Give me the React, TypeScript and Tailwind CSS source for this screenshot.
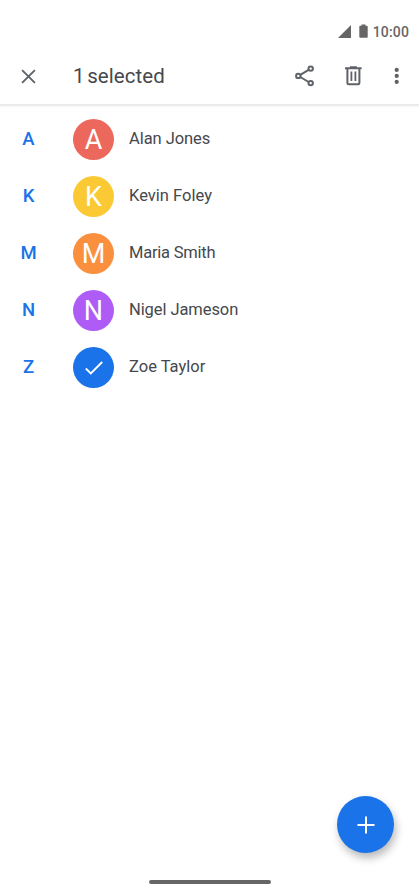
import React from "react";

type Contact = {
  name: string;
  color: string;
  tracking: string;
  selected?: boolean;
};

const contacts: Contact[] = [
  { name: "Alan Jones", color: "bg-[#ec675c]", tracking: "tracking-[-0.06px]" },
  { name: "Kevin Foley", color: "bg-[#fbc934]", tracking: "tracking-[0.02px]" },
  { name: "Maria Smith", color: "bg-[#fa903e]", tracking: "tracking-[-0.22px]" },
  { name: "Nigel Jameson", color: "bg-[#af5cf7]", tracking: "tracking-[-0.08px]" },
  {
    name: "Zoe Taylor",
    color: "bg-[#1a73e8]",
    tracking: "tracking-[0px]",
    selected: true,
  },
];

function StatusBar() {
  return (
    <div className="flex h-[46px] items-start justify-end pr-[10px] pt-[22px] text-[#666]">
      <svg width="13" height="13" viewBox="0 0 13 13" className="mt-[3px]">
        <path d="M13 0v13H0z" fill="currentColor" />
      </svg>
      <svg width="9" height="14" viewBox="0 0 9 14" className="ml-[8px] mt-[2px]">
        <path
          d="M2.5 0.5h4v1.2h1.3q.9 0 .9.9v10.2q0 .9-.9.9H1.2q-.9 0-.9-.9V2.6q0-.9.9-.9h1.3z"
          fill="currentColor"
        />
      </svg>
      <span className="ml-[5px] text-[14px] font-medium leading-[20px] tracking-[0.15px]">
        10:00
      </span>
    </div>
  );
}

function Toolbar() {
  return (
    <header className="flex h-[60px] items-center border-b-2 border-[#ebebeb] text-[#5f6368] shadow-[0_1px_2px_rgba(0,0,0,0.04)]">
      <svg
        width="15"
        height="15"
        viewBox="0 0 15 15"
        className="ml-[21px] mt-[2px]"
        stroke="currentColor"
        strokeWidth="1.9"
      >
        <path d="M1.1 1.1l12.8 12.8M13.9 1.1L1.1 13.9" />
      </svg>
      <h1 className="ml-[37px] flex-1 whitespace-nowrap pt-[2px] text-[20.5px] leading-[24px] tracking-[0.05px] [word-spacing:-2.5px] text-[#45484c]">
        1 selected
      </h1>
      <svg
        width="20"
        height="22"
        viewBox="0 0 20 22"
        className="mr-[29px] mt-[1px]"
        fill="none"
        stroke="currentColor"
        strokeWidth="2"
      >
        <path d="M5.3 9.8l8.3-4.9M5.3 12l8.3 5" />
        <circle cx="3.3" cy="10.9" r="2.2" />
        <circle cx="15.7" cy="3.6" r="2.2" />
        <circle cx="15.7" cy="18.1" r="2.2" />
      </svg>
      <svg
        width="18"
        height="20"
        viewBox="0 0 18 20"
        className="mr-[32px] mt-[2px]"
        fill="none"
        stroke="currentColor"
        strokeWidth="2"
      >
        <path d="M1 2.2h16.6M5.9 1.2h7M3.4 2.2v14.8q0 1.3 1.3 1.3h9.4q1.3 0 1.3-1.3V2.2" />
        <path d="M7.4 5.5v9.5M11.4 5.5v9.5" strokeWidth="1.8" />
      </svg>
      <svg
        width="6"
        height="18"
        viewBox="0 0 6 18"
        className="mr-[19px] mt-[2px]"
        fill="currentColor"
      >
        <circle cx="2.7" cy="2.9" r="2.1" />
        <circle cx="2.7" cy="8.9" r="2.1" />
        <circle cx="2.7" cy="14.9" r="2.1" />
      </svg>
    </header>
  );
}

function ContactRow({ contact }: { contact: Contact }) {
  const initial = contact.name[0];

  return (
    <li className="flex h-[57.1px] items-center">
      <span className="w-[57px] pb-[2px] text-center text-[18.5px] font-medium leading-[24px] text-[#1a73e8]">
        {initial}
      </span>
      <div
        className={`ml-[16px] flex size-[41px] items-center justify-center rounded-full text-white ${contact.color}`}
      >
        {contact.selected ? (
          <svg
            width="18"
            height="14"
            viewBox="0 0 18 14"
            className="mt-[1px]"
            fill="none"
            stroke="currentColor"
            strokeWidth="1.9"
          >
            <path d="M.8 7.5l5 5L17.2 1" />
          </svg>
        ) : (
          <span className="pt-[1px] text-[27px] leading-[32px]">{initial}</span>
        )}
      </div>
      <span
        className={`ml-[15px] whitespace-nowrap pb-[1px] text-[16.5px] leading-[22px] text-[#45484c] ${contact.tracking}`}
      >
        {contact.name}
      </span>
    </li>
  );
}

export default function App() {
  return (
    <div className="flex h-[894px] w-[419px] flex-col overflow-hidden bg-white font-['Roboto',sans-serif]">
      <StatusBar />
      <Toolbar />
      <ul className="flex-1 pt-[5px]">
        {contacts.map((contact) => (
          <ContactRow key={contact.name} contact={contact} />
        ))}
      </ul>
      <div className="flex justify-end pr-[25px]">
        <button className="flex size-[57px] items-center justify-center rounded-full bg-[#1a73e8] text-white shadow-[2px_5px_9px_rgba(0,0,0,0.28)]">
          <svg width="18" height="18" viewBox="0 0 18 18" stroke="currentColor" strokeWidth="2">
            <path d="M9 .5v17M.5 9h17" />
          </svg>
        </button>
      </div>
      <div className="flex h-[41px] items-end justify-center pb-[10px]">
        <div className="h-[4px] w-[122px] rounded-full bg-[#666]" />
      </div>
    </div>
  );
}
